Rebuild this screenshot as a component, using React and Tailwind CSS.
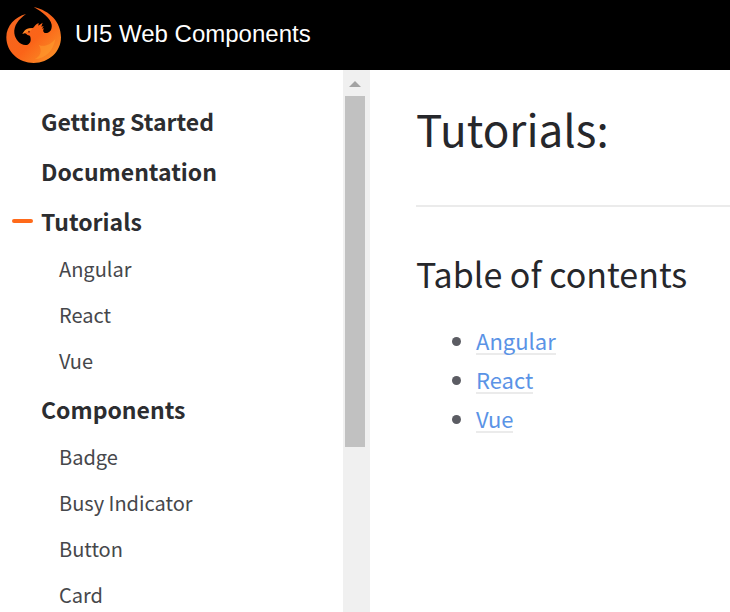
import React from "react";

const NAV_GROUPS = [
  { title: "Getting Started", items: [] },
  { title: "Documentation", items: [] },
  { title: "Tutorials", active: true, items: ["Angular", "React", "Vue"] },
  { title: "Components", items: ["Badge", "Busy Indicator", "Button", "Card"] },
];

const TOC = ["Angular", "React", "Vue"];

const toHref = (label) => `#${label.toLowerCase().replace(/\s+/g, "-")}`;

const PhoenixLogo = () => (
  <svg viewBox="15 18 171 174" className="h-[58px] w-[57px]" aria-hidden="true">
    <defs>
      <linearGradient id="phoenix" x1="0" y1="0" x2="1" y2="1">
        <stop offset="0" stopColor="#f26522" />
        <stop offset="0.55" stopColor="#fb6418" />
        <stop offset="1" stopColor="#f99a2c" />
      </linearGradient>
    </defs>
    <path
      fill="url(#phoenix)"
      d="M78 42C46 50 19 77 19 112C19 156 56 189 101 189C147 189 183 155 183 112C183 66 150 32 101 21C128 37 152 55 155 74C157 91 147 101 134 99C129 96 128 91 132 85L126 86L131 78L124 80L128 68L115 77L116 69C107 72 104 79 99 84C87 83 77 87 73 93L67 102C72 99 77 99 80 103C83 107 87 105 90 108C94 119 93 129 83 134C66 140 46 123 43 100C41 76 56 58 78 42Z"
    />
    <path
      fill="#ffa22e"
      opacity="0.5"
      d="M116 134C132 143 151 134 166 117C161 151 137 176 103 178C121 169 128 153 116 134Z"
    />
    <path
      fill="#ffa22e"
      opacity="0.6"
      d="M73 93C79 87 88 84 96 87L90 93C84 95 79 97 76 98L67 102Z"
    />
    <circle cx="87" cy="95" r="3" fill="#7a2408" />
  </svg>
);

const Header = () => (
  <header className="flex h-[70px] shrink-0 items-center bg-black px-[5px]">
    <a href="#home" className="flex items-center gap-[13px] text-white">
      <PhoenixLogo />
      <span className="pb-[3px] font-['Liberation_Sans',Arial,sans-serif] text-2xl">
        UI5 Web Components
      </span>
    </a>
  </header>
);

const NavGroup = ({ group }) => (
  <li>
    <a
      href={toHref(group.title)}
      className="flex h-[50px] items-center gap-2 pl-3 text-[23px] font-bold text-[#2c2d30]"
    >
      <span className={`h-1 w-[21px] rounded-xs ${group.active ? "bg-[#ff6a1a]" : ""}`} />
      {group.title}
    </a>
    {group.items.length > 0 && (
      <ul>
        {group.items.map((item) => (
          <li key={item}>
            <a
              href={toHref(item)}
              className="flex h-[46px] items-center pl-[59px] text-[20px] text-[#46474b]"
            >
              {item}
            </a>
          </li>
        ))}
      </ul>
    )}
  </li>
);

const Sidebar = () => (
  <aside className="flex w-[370px] shrink-0 overflow-hidden">
    <nav aria-label="Main" className="flex-1 pt-[26px]">
      <ul>
        {NAV_GROUPS.map((group) => (
          <NavGroup key={group.title} group={group} />
        ))}
      </ul>
    </nav>
    <div className="flex w-[27px] flex-col bg-[#f0f0f0] pr-[5px] pl-[2px]" aria-hidden="true">
      <div className="flex h-[26px] items-center justify-center pt-[2px]">
        <svg viewBox="0 0 12 6" className="h-[6px] w-3">
          <path d="M6 0L12 6H0Z" fill="#a3a3a3" />
        </svg>
      </div>
      <div className="h-[351px] bg-[#c1c1c1]" />
    </div>
  </aside>
);

const App = () => {
  return (
    <div className="flex h-screen flex-col overflow-hidden bg-white font-['Noto_Sans_CJK_SC',sans-serif]">
      <Header />
      <div className="flex min-h-0 flex-1">
        <Sidebar />
        <main className="min-w-0 flex-1 pt-[30px] pl-[46px]">
          <h1 className="border-b-2 border-[#ebebeb] pb-[49px] text-[44px] leading-[56px] text-[#26272b]">
            Tutorials:
          </h1>
          <h2 className="mt-[43px] text-[34px] leading-[48px] text-[#26272b]">
            Table of contents
          </h2>
          <ul className="mt-[23px] list-disc pl-[60px] text-[22px] leading-[39px] text-[#5b5c63]">
            {TOC.map((item) => (
              <li key={item}>
                <a
                  href={toHref(item)}
                  className="inline-block border-b-2 border-[#ebebeb] leading-[26px] text-[#5a93e6]"
                >
                  {item}
                </a>
              </li>
            ))}
          </ul>
        </main>
      </div>
    </div>
  );
};

export default App;
